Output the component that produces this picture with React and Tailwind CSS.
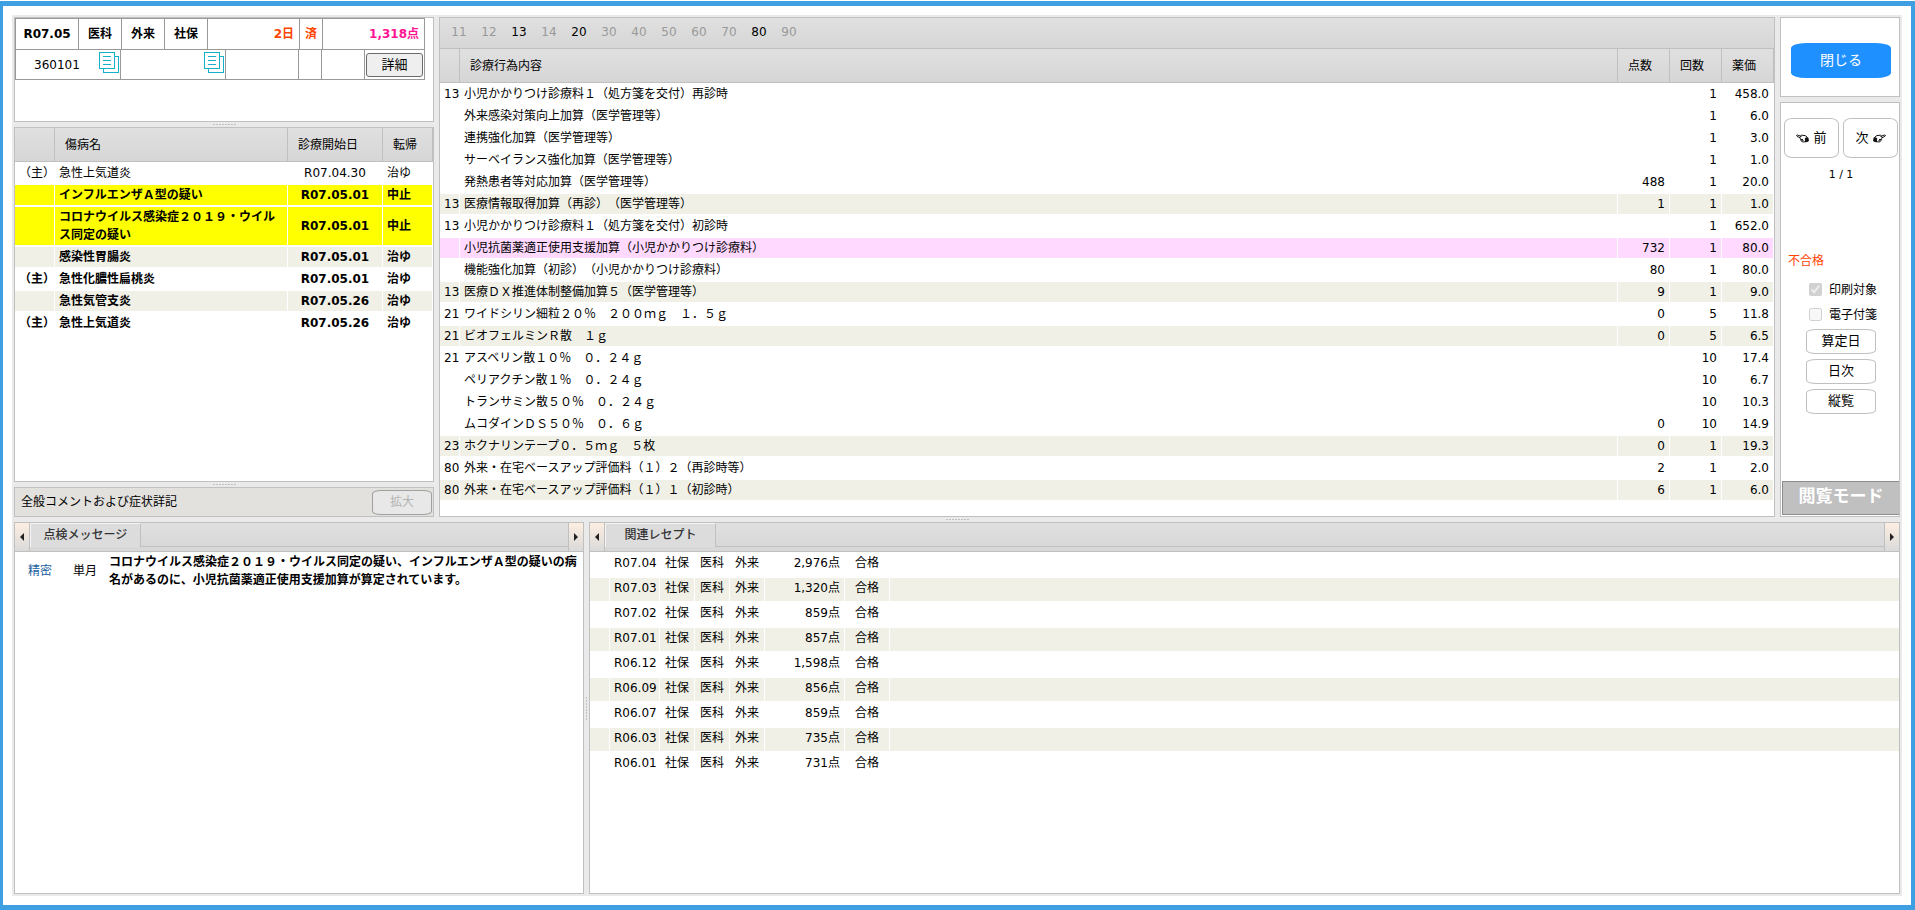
/*
 Receipt check screen: diagnoses, treatments, check messages and related receipts
*/

import { useState } from "react";
import clsx from "clsx";

const sections = [
  { no: "11" },
  { no: "12" },
  { no: "13", active: true },
  { no: "14" },
  { no: "20", active: true },
  { no: "30" },
  { no: "40" },
  { no: "50" },
  { no: "60" },
  { no: "70" },
  { no: "80", active: true },
  { no: "90" },
];

const diseases = [
  { main: true, name: "急性上気道炎", start: "R07.04.30", outcome: "治ゆ" },
  { name: "インフルエンザＡ型の疑い", start: "R07.05.01", outcome: "中止", bold: true, tone: "alert" },
  { name: "コロナウイルス感染症２０１９・ウイルス同定の疑い", start: "R07.05.01", outcome: "中止", bold: true, tone: "alert" },
  { name: "感染性胃腸炎", start: "R07.05.01", outcome: "治ゆ", bold: true, tone: "alt" },
  { main: true, name: "急性化膿性扁桃炎", start: "R07.05.01", outcome: "治ゆ", bold: true },
  { name: "急性気管支炎", start: "R07.05.26", outcome: "治ゆ", bold: true, tone: "alt" },
  { main: true, name: "急性上気道炎", start: "R07.05.26", outcome: "治ゆ", bold: true },
];

// [section, name, points, count, price, tone]
const treatments = [
  ["13", "小児かかりつけ診療料１（処方箋を交付）再診時", "", "1", "458.0"],
  ["", "外来感染対策向上加算（医学管理等）", "", "1", "6.0"],
  ["", "連携強化加算（医学管理等）", "", "1", "3.0"],
  ["", "サーベイランス強化加算（医学管理等）", "", "1", "1.0"],
  ["", "発熱患者等対応加算（医学管理等）", "488", "1", "20.0"],
  ["13", "医療情報取得加算（再診）（医学管理等）", "1", "1", "1.0", "alt"],
  ["13", "小児かかりつけ診療料１（処方箋を交付）初診時", "", "1", "652.0"],
  ["", "小児抗菌薬適正使用支援加算（小児かかりつけ診療料）", "732", "1", "80.0", "error"],
  ["", "機能強化加算（初診）（小児かかりつけ診療料）", "80", "1", "80.0"],
  ["13", "医療ＤＸ推進体制整備加算５（医学管理等）", "9", "1", "9.0", "alt"],
  ["21", "ワイドシリン細粒２０％　２００ｍｇ　１．５ｇ", "0", "5", "11.8"],
  ["21", "ビオフェルミンＲ散　１ｇ", "0", "5", "6.5", "alt"],
  ["21", "アスベリン散１０％　０．２４ｇ", "", "10", "17.4"],
  ["", "ペリアクチン散１％　０．２４ｇ", "", "10", "6.7"],
  ["", "トランサミン散５０％　０．２４ｇ", "", "10", "10.3"],
  ["", "ムコダインＤＳ５０％　０．６ｇ", "0", "10", "14.9"],
  ["23", "ホクナリンテープ０．５ｍｇ　５枚", "0", "1", "19.3", "alt"],
  ["80", "外来・在宅ベースアップ評価料（１）２（再診時等）", "2", "1", "2.0"],
  ["80", "外来・在宅ベースアップ評価料（１）１（初診時）", "6", "1", "6.0", "alt"],
];

const receipts = [
  ["R07.04", "2,976点"],
  ["R07.03", "1,320点"],
  ["R07.02", "859点"],
  ["R07.01", "857点"],
  ["R06.12", "1,598点"],
  ["R06.09", "856点"],
  ["R06.07", "859点"],
  ["R06.03", "735点"],
  ["R06.01", "731点"],
];

const tones = {
  alert: "bg-[#ffff00]",
  alt: "bg-[#f0f0e6]",
  error: "bg-[#ffd9ff]",
};

const cell = "border-y border-r border-white py-px px-1 leading-[18px]";
const head =
  "h-[34px] border-r border-b border-[#c0c0c0] bg-linear-to-b from-[#e0e0e0] to-[#d6d6d6] pl-2.5 text-left font-normal whitespace-nowrap";

function Panel({ className, children }) {
  return (
    <section className={clsx("border border-[#c0c0c0] bg-white", className)}>
      {children}
    </section>
  );
}

// drag handle between two panels
function Splitter({ vertical, plain }) {
  return (
    <div
      className={clsx(
        "flex shrink-0 items-center justify-center",
        vertical ? "w-[5px]" : "h-[5px]"
      )}
    >
      {!plain && (
        <span
          className={
            vertical
              ? "h-[23px] w-px bg-[repeating-linear-gradient(to_bottom,#c0c0c0_0_2px,transparent_2px_3px)]"
              : "h-px w-[23px] bg-[repeating-linear-gradient(to_right,#c0c0c0_0_2px,transparent_2px_3px)]"
          }
        />
      )}
    </div>
  );
}

function CopyIcon() {
  return (
    <svg width="20" height="21" viewBox="0 0 20 21" fill="white" stroke="#17b0cb">
      <rect x="4.5" y="4.5" width="15" height="16" />
      <rect x="0.5" y="0.5" width="15" height="16" />
      <path d="M4 4.5h8M4 8.5h8M4 12.5h8" />
    </svg>
  );
}

// pointing hand with a dark cuff, mirrored for "next"
function HandIcon({ right }) {
  return (
    <svg
      width="13"
      height="9"
      viewBox="0 0 13 9"
      fill="none"
      stroke="#111"
      strokeLinejoin="round"
      className={clsx(right && "-scale-x-100")}
    >
      <path d="M5.5 2.5 1.5 1C0.4 0.8 0.3 2 1.2 2.4L4.6 4C3.6 4.6 4 5.4 4.8 5.5 4.3 6.3 5 6.9 5.8 6.9 5.8 7.7 6.5 8.1 7.4 7.9L10 7.6" />
      <path d="M4 2.6 5.6 1.2 9.2 1.6 11 3M4.8 5.5 7 5.4M5.8 6.9 7.6 6.7" />
      <path d="M9.3 4.2 11.9 3.6 12.4 7 9.6 7.9Z" fill="#111" />
    </svg>
  );
}

function ScrollButton({ direction }) {
  const left = direction === "left";
  return (
    <button
      aria-label={left ? "左へ" : "右へ"}
      className={clsx(
        "flex w-[15px] shrink-0 items-center justify-center border-[#c0c0c0] bg-linear-to-b from-[#fdeee0] to-[#dadada]",
        left ? "border-r" : "border-l"
      )}
    >
      <svg width="4" height="8" viewBox="0 0 4 8" fill="#222">
        <path d={left ? "M4 0v8L0 4z" : "M0 0v8l4-4z"} />
      </svg>
    </button>
  );
}

function TabBar({ title }) {
  return (
    <div className="flex h-[29px] border-b border-[#c0c0c0]">
      <ScrollButton direction="left" />
      <div className="flex flex-1 flex-col bg-[#d8d8d8]">
        <div className="flex h-6 border-b border-[#c0c0c0] bg-linear-to-b from-[#e0e0e0] to-[#d8d8d8]">
          <button className="-mb-px w-[111px] border-t border-r border-l border-t-[#f4f4f4] border-r-[#c0c0c0] border-l-[#f4f4f4] bg-[#dcdcdc] pb-0.5 font-medium text-[#333]">
            {title}
          </button>
        </div>
      </div>
      <ScrollButton direction="right" />
    </div>
  );
}

function Summary() {
  return (
    <Panel className="h-[105px]">
      <div className="w-[410px] border-t border-l border-[#999]">
        <div className="flex h-[31px] font-bold *:flex *:items-center *:justify-center *:border-r *:border-b *:border-[#999]">
          <span className="w-[63px]">R07.05</span>
          <span className="w-[43px]">医科</span>
          <span className="w-[43px]">外来</span>
          <span className="w-[43px]">社保</span>
          <span className="w-[92px] justify-end! pr-[5px] text-[#ff4500]">2日</span>
          <span className="w-[23px] text-[#ff4500]">済</span>
          <span className="w-[102px] justify-end! pr-[5px] text-[#ff1493]">1,318点</span>
        </div>
        <div className="flex h-[30px] *:flex *:items-center *:border-r *:border-b *:border-[#999]">
          <span className="w-[105px] justify-between pl-[18px]">
            360101
            <button aria-label="番号をコピー" className="pr-px pb-[5px]">
              <CopyIcon />
            </button>
          </span>
          <span className="w-[105px] justify-end">
            <button aria-label="氏名をコピー" className="pr-px pb-[5px]">
              <CopyIcon />
            </button>
          </span>
          <span className="w-[73px]" />
          <span className="w-[23px]" />
          <span className="w-[43px]" />
          <span className="w-[60px] px-px">
            <button className="h-6 w-full rounded-[3px] border border-[#6b6b6b] bg-[#efefef] text-[13px]">
              詳細
            </button>
          </span>
        </div>
      </div>
    </Panel>
  );
}

function DiseaseTable() {
  return (
    <Panel className="flex-1">
      <table className="w-full table-fixed border-separate border-spacing-0">
        <thead>
          <tr>
            <th className={clsx(head, "w-10")} />
            <th className={head}>傷病名</th>
            <th className={clsx(head, "w-[95px]")}>診療開始日</th>
            <th className={clsx(head, "w-[50px]")}>転帰</th>
          </tr>
        </thead>
        <tbody>
          {diseases.map((d, i) => (
            <tr key={i} className={clsx(d.bold && "font-bold", tones[d.tone])}>
              <td className={clsx(cell, "whitespace-nowrap")}>{d.main && "（主）"}</td>
              <td className={cell}>{d.name}</td>
              <td className={clsx(cell, "text-center")}>{d.start}</td>
              <td className={cell}>{d.outcome}</td>
            </tr>
          ))}
        </tbody>
      </table>
    </Panel>
  );
}

function TreatmentPanel() {
  return (
    <Panel className="min-w-0 flex-1">
      <nav className="flex h-[31px] border-b border-[#c0c0c0] bg-linear-to-b from-[#e0e0e0] to-[#d6d6d6] pb-[3px] pl-1">
        {sections.map((s) => (
          <button
            key={s.no}
            className={clsx("w-[30px]", s.active ? "text-black" : "text-[#999]")}
          >
            {s.no}
          </button>
        ))}
      </nav>
      <table className="w-full table-fixed border-separate border-spacing-0">
        <thead>
          <tr>
            <th className={clsx(head, "w-5")} />
            <th className={head}>診療行為内容</th>
            <th className={clsx(head, "w-[52px]")}>点数</th>
            <th className={clsx(head, "w-[52px]")}>回数</th>
            <th className={clsx(head, "w-[52px]")}>薬価</th>
          </tr>
        </thead>
        <tbody>
          {treatments.map(([section, name, points, count, price, tone], i) => (
            <tr key={i} className={tones[tone]}>
              <td className={cell}>{section}</td>
              <td className={cell}>{name}</td>
              <td className={clsx(cell, "text-right")}>{points}</td>
              <td className={clsx(cell, "text-right")}>{count}</td>
              <td className={clsx(cell, "text-right")}>{price}</td>
            </tr>
          ))}
        </tbody>
      </table>
    </Panel>
  );
}

function SidePanel() {
  const [print] = useState(true);
  const [memo] = useState(false);

  return (
    <aside className="flex w-[120px] shrink-0 flex-col">
      <Panel className="flex h-20 justify-center pt-[25px] pl-0.5">
        <button className="h-[35px] w-[100px] rounded-[15%] bg-[#1e90ff] pb-0.5 text-sm text-white">
          閉じる
        </button>
      </Panel>
      <Splitter plain />
      <Panel className="flex flex-1 flex-col pt-[15px]">
        <div className="flex justify-center gap-1 pl-0.5 *:flex *:h-10 *:w-[55px] *:items-center *:justify-center *:gap-1 *:rounded-[15%] *:border *:border-[#c0c0c0] *:text-[13px]">
          <button>
            <HandIcon /> 前
          </button>
          <button>
            次 <HandIcon right />
          </button>
        </div>
        <p className="mt-[9px] pl-0.5 text-center text-[11px] leading-4">1 / 1</p>
        <p className="mt-[69px] pl-[7px] leading-[18px] text-[#ff4500]">不合格</p>
        <div className="mt-[7px] flex flex-col pl-7">
          <label className="flex h-[25px] items-center gap-[7px]">
            <input type="checkbox" checked={print} disabled readOnly />
            印刷対象
          </label>
          <label className="flex h-[25px] items-center gap-[7px]">
            <input type="checkbox" checked={memo} disabled readOnly />
            電子付箋
          </label>
        </div>
        <div className="mt-[2px] flex flex-col items-center gap-[5px] pl-0.5 *:h-[25px] *:w-[70px] *:rounded-[15%] *:border *:border-[#c0c0c0] *:pb-0.5 *:text-[13px] *:leading-none">
          <button>算定日</button>
          <button>日次</button>
          <button>縦覧</button>
        </div>
        <div className="mt-auto mb-px ml-px h-[34px] border border-r-0 border-[#8c8c8c] bg-[#c0c0c0] text-center text-[17px] leading-[28px] font-bold text-white">
          閲覧モード
        </div>
      </Panel>
    </aside>
  );
}

function MessagePanel() {
  return (
    <Panel className="w-[570px] shrink-0">
      <TabBar title="点検メッセージ" />
      <table className="w-full table-fixed">
        <tbody>
          <tr>
            <td className="w-[54px] pl-[13px]">
              <a href="#detail" className="text-[#1a5fa0]">
                精密
              </a>
            </td>
            <td className="w-10 pl-1">単月</td>
            <td className="py-px pr-1 leading-[18px] font-bold">
              コロナウイルス感染症２０１９・ウイルス同定の疑い、インフルエンザＡ型の疑いの病名があるのに、小児抗菌薬適正使用支援加算が算定されています。
            </td>
          </tr>
        </tbody>
      </table>
    </Panel>
  );
}

function RelatedPanel() {
  return (
    <Panel className="min-w-0 flex-1">
      <TabBar title="関連レセプト" />
      <table className="w-full table-fixed border-separate border-spacing-0">
        <colgroup>
          <col className="w-5" />
          <col className="w-[50px]" />
          <col className="w-[35px]" />
          <col className="w-[35px]" />
          <col className="w-[35px]" />
          <col className="w-20" />
          <col className="w-[45px]" />
          <col />
        </colgroup>
        <tbody>
          {receipts.map(([month, points], i) => (
            <tr
              key={month}
              className={clsx("h-[25px] *:align-top", i % 2 === 1 && tones.alt)}
            >
              <td className={cell} />
              <td className={cell}>{month}</td>
              <td className={clsx(cell, "text-center")}>社保</td>
              <td className={clsx(cell, "text-center")}>医科</td>
              <td className={clsx(cell, "text-center")}>外来</td>
              <td className={clsx(cell, "text-right")}>{points}</td>
              <td className={clsx(cell, "text-center")}>合格</td>
              <td className="border-y border-white" />
            </tr>
          ))}
        </tbody>
      </table>
    </Panel>
  );
}

export default function App() {
  return (
    <div className="flex min-h-screen flex-col bg-white pt-px font-['DejaVu_Sans','Noto_Sans_CJK_JP',sans-serif] text-xs text-black [text-spacing-trim:space-all]">
      <main className="flex flex-1 flex-col border-y-[5px] border-r-4 border-l-[3px] border-[#3f9fe3] p-[9px]">
        <div className="flex flex-1 flex-col bg-[#eaeaea] p-[2px]">
          <div className="flex min-h-[500px]">
            <div className="flex w-[420px] shrink-0 flex-col">
              <Summary />
              <Splitter />
              <DiseaseTable />
              <Splitter />
              <Panel className="flex h-[30px] items-center justify-between bg-[#e2e1dd]! pr-px pl-1.5">
                全般コメントおよび症状詳記
                <button
                  disabled
                  className="h-[25px] w-[60px] rounded-[15%] border border-[#a0a0a0] bg-[#e8e8e8] text-[#b4b4b4]"
                >
                  拡大
                </button>
              </Panel>
            </div>
            <Splitter vertical plain />
            <TreatmentPanel />
            <Splitter vertical plain />
            <SidePanel />
          </div>
          <Splitter />
          <div className="flex flex-1">
            <MessagePanel />
            <Splitter vertical />
            <RelatedPanel />
          </div>
        </div>
      </main>
    </div>
  );
}
